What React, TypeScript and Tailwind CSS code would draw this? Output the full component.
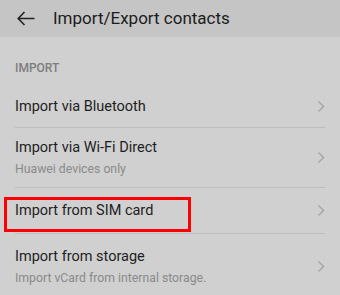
import React from 'react';

const rows = [
  { title: 'Import via Bluetooth', h: 'h-[42px]' },
  { title: 'Import via Wi-Fi Direct', sub: 'Huawei devices only', h: 'h-[60px]' },
  { title: 'Import from SIM card', h: 'h-[46px]', boxed: true },
  { title: 'Import from storage', sub: 'Import vCard from internal storage.', h: 'h-[64px]' },
];

const Chevron = () => (
  <svg width="8" height="13" viewBox="0 0 8 13" fill="none" className="shrink-0">
    <path d="M1.5 1.5 L6.5 6.5 L1.5 11.5" stroke="#a3a3a3" strokeWidth="1.4" />
  </svg>
);

export default function App() {
  return (
    <div className="w-[340px] h-[295px] overflow-hidden bg-[#d0d0d0] font-['Roboto',sans-serif]">
      <div className="h-[37px] bg-[#c5c5c5] flex items-center pl-[17px]">
        <svg width="18" height="15" viewBox="0 0 18 15" fill="none">
          <path d="M17.5 7.5 H1.5 M7.5 1 L1.2 7.5 L7.5 14" stroke="#222" strokeWidth="1.6" />
        </svg>
        <span className="ml-[18px] text-[17px] text-[#1c1c1c]">Import/Export contacts</span>
      </div>
      <div className="h-[49px] flex items-end pl-[15px] pb-[11px]">
        <span className="text-[12px] leading-[14px] font-medium text-[#7d7d7d]">IMPORT</span>
      </div>
      {rows.map((r, i) => (
        <div key={i} className="relative pl-[15px] pr-[15px]">
          <div className={`${r.h} flex items-center justify-between ${i < rows.length - 1 ? 'border-b border-[#bdbdbd]' : ''}`}>
            <div className="flex flex-col">
              <span className="text-[14.5px] leading-[20px] text-[#1e1e1e]">{r.title}</span>
              {r.sub && <span className="text-[12.25px] leading-[16px] mt-[3px] text-[#8a8a8a]">{r.sub}</span>}
            </div>
            <Chevron />
          </div>
          {r.boxed && (
            <div className="absolute left-[4px] top-[9px] w-[187px] h-[35px] border-[3px] border-[#ff0000]" />
          )}
        </div>
      ))}
    </div>
  );
}
